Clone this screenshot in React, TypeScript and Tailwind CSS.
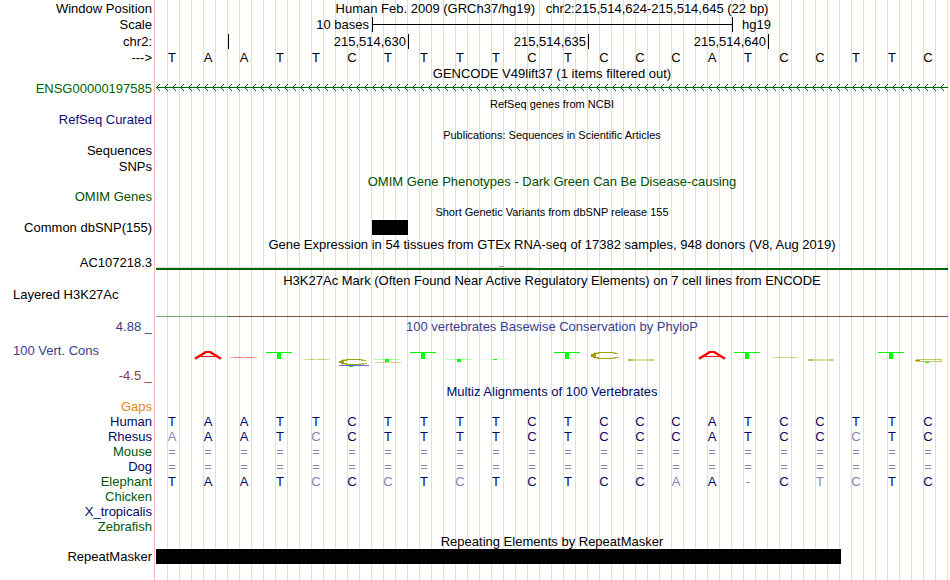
import type { ReactNode } from "react";
import clsx from "clsx";

const bases = "TAATTCTTTTCTCCCATCCTTC";

const species = [
  { name: "Gaps", color: "text-[#e6890f]", seq: "", dim: [] },
  { name: "Human", color: "text-[#000a64]", seq: bases, dim: [] },
  { name: "Rhesus", color: "text-[#000a64]", seq: "AAATCCTTTTCTCCCATCCCTC", dim: [0, 4, 19] },
  { name: "Mouse", color: "text-[#005a0a]", seq: "======================", dim: [] },
  { name: "Dog", color: "text-[#000a64]", seq: "======================", dim: [] },
  { name: "Elephant", color: "text-[#005a0a]", seq: "TAATCCCTCTCTCCAA-CTCTC", dim: [4, 6, 8, 14, 16, 18, 19] },
  { name: "Chicken", color: "text-[#005a0a]", seq: "", dim: [] },
  { name: "X_tropicalis", color: "text-[#000a64]", seq: "", dim: [] },
  { name: "Zebrafish", color: "text-[#005a0a]", seq: "", dim: [] },
];

const olive = "#a0a000";
const green = "#00ff00";

const TallA = () => (
  <g stroke="#ff0000" strokeWidth="2.4">
    <line x1="3" y1="7.7" x2="14" y2="1" />
    <line x1="13" y1="1" x2="19" y2="1" strokeWidth="2" />
    <line x1="18" y1="1" x2="29" y2="7.7" />
    <line x1="9" y1="5.5" x2="23" y2="5.5" strokeWidth="1" />
  </g>
);

const TallT = () => (
  <g fill={green}>
    <rect x="2" y="1" width="26" height="1" />
    <rect x="13" y="1" width="4" height="7" />
  </g>
);

const ShortT = ({ height, opacity }: { height: number; opacity: number }) => (
  <g fill={green}>
    <rect x="2" y="8" width="26" height="1" opacity={opacity} />
    <rect x="13" y="8" width="4" height={height} />
  </g>
);

const RoundC = ({ y, height }: { y: number; height: number }) => (
  <g fill={olive}>
    <rect x="10" y={y} width="15" height="1" />
    <rect x="6" y={y} width="4" height="1" opacity="0.4" />
    <rect x="25" y={y} width="3" height="1" opacity="0.5" />
    <rect x="5" y={y + 1} width="6" height="1" />
    <rect x="25" y={y + 1} width="5" height="1" opacity="0.8" />
    <rect x="3" y={y + 2} width="5" height={height - 4} />
    <rect x="5" y={y + height - 2} width="6" height="1" />
    <rect x="25" y={y + height - 2} width="6" height="1" opacity="0.8" />
    <rect x="10" y={y + height - 1} width="15" height="1" />
    <rect x="6" y={y + height - 1} width="4" height="1" opacity="0.4" />
    <rect x="25" y={y + height - 1} width="3" height="1" opacity="0.5" />
  </g>
);

const FlatBar = ({ x, y, color }: { x: number; y: number; color: string }) => (
  <g fill={color}>
    <rect x={x} y={y} width="27" height="1" opacity="0.3" />
    <rect x={x + 4} y={y} width="8" height="1" opacity="0.3" />
    <rect x={x + 15} y={y} width="8" height="1" opacity="0.3" />
  </g>
);

const LowC = () => (
  <g fill={olive}>
    <rect x="4" y="8" width="26" height="2" opacity="0.35" />
    <rect x="4" y="8" width="5" height="2" opacity="0.5" />
    <rect x="26" y="8" width="3" height="2" opacity="0.3" />
  </g>
);

// one mark per base, keyed by its index in the window
const marks: Record<number, ReactNode> = {
  1: <TallA />,
  2: <FlatBar x={2} y={6} color="#ff0000" />,
  3: <TallT />,
  4: <FlatBar x={3} y={8} color={olive} />,
  5: (
    <>
      <RoundC y={8} height={6} />
      <rect x="3" y="14" width="30" height="1" fill="#6464ff" />
      <rect x="13" y="15" width="4" height="1" fill={green} />
    </>
  ),
  6: (
    <>
      <ShortT height={3} opacity={0.35} />
      <FlatBar x={3} y={11} color={olive} />
    </>
  ),
  7: <TallT />,
  8: <ShortT height={3} opacity={0.3} />,
  9: <ShortT height={1} opacity={0.12} />,
  11: <TallT />,
  12: <RoundC y={1} height={7} />,
  13: <LowC />,
  15: <TallA />,
  16: <TallT />,
  17: <FlatBar x={4} y={6} color={olive} />,
  18: <LowC />,
  20: <TallT />,
  21: (
    <>
      <g fill={olive}>
        <rect x="4" y="8" width="26" height="1" opacity="0.6" />
        <rect x="4" y="10" width="26" height="1" opacity="0.6" />
        <rect x="3" y="9" width="5" height="1" />
        <rect x="27" y="9" width="3" height="1" opacity="0.3" />
      </g>
      <rect x="13" y="11" width="4" height="1" fill={green} />
    </>
  ),
};

const baseGrid = "grid grid-cols-[repeat(22,minmax(0,1fr))]";

type TrackProps = {
  label?: string;
  color?: string;
  height?: string;
  left?: boolean;
  children?: ReactNode;
};

const Track = ({ label, color = "text-black", height = "h-4", left, children }: TrackProps) => (
  <div className={clsx("flex", height, color)}>
    <div className={clsx("w-[156px] shrink-0", left ? "pl-[13px]" : "pr-1 text-right")}>{label}</div>
    <div className="min-w-0 flex-1">{children}</div>
  </div>
);

const Title = ({ small, children }: { small?: boolean; children: ReactNode }) => (
  <h2 className={clsx("whitespace-pre text-center", small && "text-[11px]")}>{children}</h2>
);

const ruler = [
  { label: "215,514,630", span: "col-start-3 col-end-8", tick: "col-start-8" },
  { label: "215,514,635", span: "col-start-9 col-end-13", tick: "col-start-13" },
  { label: "215,514,640", span: "col-start-14 col-end-18", tick: "col-start-18" },
];

const Backdrop = () => (
  <div className="absolute inset-0 -z-10 flex pr-0.5">
    <div className="mr-px w-[155px] shrink-0 border-r border-[#ffb4b4]" />
    <div className="flex-1 bg-[linear-gradient(to_right,transparent_calc(100%-1px),#dcdcf8_calc(100%-1px))] bg-size-[calc(100%/66)_100%]" />
  </div>
);

const GeneArrows = () => (
  <svg className="mt-[3px] block h-[7px] w-full" shapeRendering="crispEdges">
    <defs>
      <pattern id="strand" width="8" height="7" patternUnits="userSpaceOnUse">
        <path d="M0 3h8v1h-8zM1 2h1v1h-1zM1 4h1v1h-1zM2 1h1v1h-1zM2 5h1v1h-1zM3 0h1v1h-1zM3 6h1v1h-1z" fill="#006400" />
      </pattern>
    </defs>
    <rect width="100%" height="7" fill="url(#strand)" />
  </svg>
);

const Alignment = () => (
  <table className="w-full table-fixed border-collapse">
    <tbody>
      {species.map((s) => (
        <tr key={s.name} className="h-[15px]">
          <th scope="row" className={clsx("w-[156px] p-0 pr-1 text-right font-normal", s.color)}>
            {s.name}
          </th>
          {Array.from({ length: 22 }, (_, i) => (
            <td
              key={i}
              className={clsx(
                "p-0 pr-1 text-center",
                s.seq[i] === "=" || s.dim.some((d) => d === i) ? "text-[#8286b4]" : "text-[#000a64]",
              )}
            >
              {s.seq[i]}
            </td>
          ))}
        </tr>
      ))}
    </tbody>
  </table>
);

export default function App() {
  return (
    <main className="relative isolate min-h-screen bg-white pr-0.5 pt-px font-['Liberation_Sans',Arial,sans-serif] text-[13px] leading-[15px]">
      <Backdrop />

      <Track label="Window Position">
        <h1 className="whitespace-pre text-center">
          {"Human Feb. 2009 (GRCh37/hg19)   chr2:215,514,624-215,514,645 (22 bp)"}
        </h1>
      </Track>
      <Track label="Scale" height="h-[17px]">
        <div className={baseGrid}>
          <div className="col-start-3 col-end-7 pr-[3px] text-right">10 bases</div>
          <div className="col-span-10 flex items-center border-l border-black">
            <div className="h-px w-full bg-black" />
          </div>
          <div className="col-span-3 border-l border-black pl-[9px]">hg19</div>
        </div>
      </Track>
      <Track label="chr2:">
        <div className={clsx(baseGrid, "h-[15px]")}>
          <div className="col-start-3 row-start-1 border-l border-black" />
          {ruler.map((r) => (
            <div key={r.label} className="contents">
              <div className={clsx("row-start-1 pr-0.5 text-right", r.span)}>{r.label}</div>
              <div className={clsx("row-start-1 border-l border-black", r.tick)} />
            </div>
          ))}
        </div>
      </Track>
      <Track label="--->">
        <div className={clsx(baseGrid, "text-center")}>
          {bases.split("").map((b, i) => (
            <span key={i} className="pr-1">{b}</span>
          ))}
        </div>
      </Track>

      <Track height="h-[15px]">
        <Title>GENCODE V49lift37 (1 items filtered out)</Title>
      </Track>
      <Track label="ENSG00000197585" color="text-[#006400]">
        <GeneArrows />
      </Track>

      <Track height="h-[15px]">
        <Title small>RefSeq genes from NCBI</Title>
      </Track>
      <Track label="RefSeq Curated" color="text-[#0c0c78]" />

      <Track height="h-[15px]">
        <Title small>Publications: Sequences in Scientific Articles</Title>
      </Track>
      <Track label="Sequences" />
      <Track label="SNPs" height="h-[15px]" />

      <Track height="h-[15px]" color="text-[#005000]">
        <Title>OMIM Gene Phenotypes - Dark Green Can Be Disease-causing</Title>
      </Track>
      <Track label="OMIM Genes" color="text-[#005000]" />

      <Track height="h-[15px]">
        <Title small>Short Genetic Variants from dbSNP release 155</Title>
      </Track>
      <Track label="Common dbSNP(155)" height="h-[17px]">
        <div className={baseGrid}>
          <div className="col-start-7 h-[15px] bg-black" />
        </div>
      </Track>

      <Track height="h-[18px]">
        <Title>Gene Expression in 54 tissues from GTEx RNA-seq of 17382 samples, 948 donors (V8, Aug 2019)</Title>
      </Track>
      <Track label="AC107218.3" height="h-[18px]">
        <div className="flex h-[15px] flex-col justify-end">
          <div className="ml-[43.3%] h-px w-[5px] bg-[#a0a0a0]" />
          <div className="h-px w-[47.7%] bg-[#dcdcdc]" />
          <div className="h-0.5 bg-[#006400]" />
        </div>
      </Track>

      <Track height="h-[14px]">
        <Title>H3K27Ac Mark (Often Found Near Active Regulatory Elements) on 7 cell lines from ENCODE</Title>
      </Track>
      <Track label="Layered H3K27Ac" height="h-8" left>
        <div className={clsx(baseGrid, "h-[30px] items-end")}>
          <div className="col-span-2 h-px bg-[#78a878]" />
          <div className="col-start-3 -col-end-1 h-px bg-[#7d5037]" />
        </div>
      </Track>

      <Track label="4.88 _" height="h-6" color="text-[#3c3c8c]">
        <Title>100 vertebrates Basewise Conservation by PhyloP</Title>
      </Track>
      <Track label="100 Vert. Cons" height="h-[25px]" color="text-[#3c3c8c]" left>
        <div className={clsx(baseGrid, "pt-2")}>
          {bases.split("").map((_, i) => (
            <svg key={i} viewBox="0 0 36 16" preserveAspectRatio="none" className="h-4 w-full">
              {marks[i]}
            </svg>
          ))}
        </div>
      </Track>
      <Track label="-4.5 _" color="text-[#8c3c3c]" />

      <Track height="h-[15px]" color="text-[#000a64]">
        <Title>Multiz Alignments of 100 Vertebrates</Title>
      </Track>
      <Alignment />

      <Track height="h-[15px]">
        <Title>Repeating Elements by RepeatMasker</Title>
      </Track>
      <Track label="RepeatMasker">
        <div className="h-[15px] w-[86.5%] bg-black" />
      </Track>
    </main>
  );
}
